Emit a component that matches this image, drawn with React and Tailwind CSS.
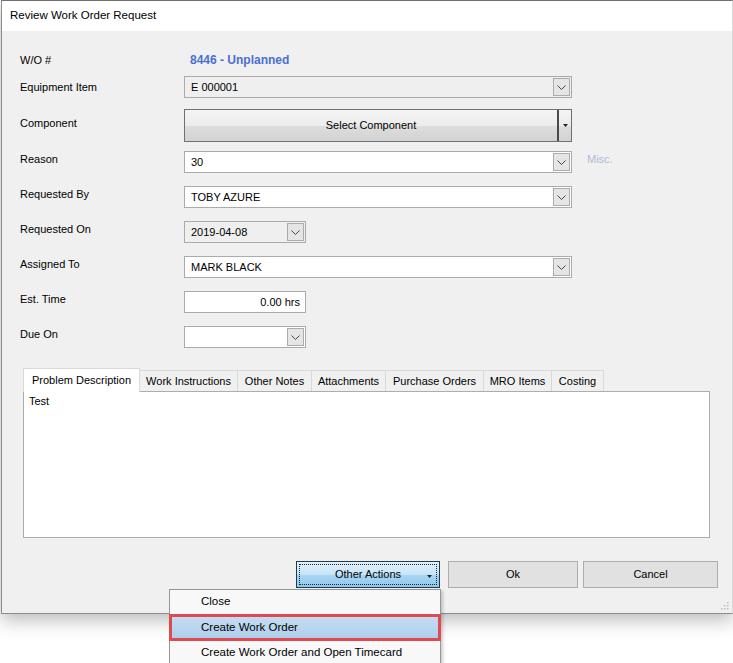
const font = { fontFamily: '"Liberation Sans", Arial, sans-serif' };

function DropButton() {
  return (
    <span className="flex h-[18px] w-[17px] items-center justify-center border border-[#acacac] bg-[#e5e5e5]">
      <svg width="9" height="5" viewBox="0 0 9 5">
        <path d="M0.5 0.5 L4.5 4.5 L8.5 0.5" fill="none" stroke="#444" strokeWidth="1" />
      </svg>
    </span>
  );
}

function Combo({ value, width = "w-[388px]", disabled = false }) {
  return (
    <div
      className={`flex h-[22px] ${width} items-center justify-between border border-[#ababab] pl-[6px] pr-[1px] ${
        disabled ? "bg-[#efefef]" : "bg-white"
      }`}
    >
      <span className="text-[11px] leading-none text-black">{value}</span>
      <DropButton />
    </div>
  );
}

function Row({ label, children, extra }) {
  return (
    <div className="flex h-[35px] items-start">
      <div className="w-[164px] pt-[1px] text-[11px] leading-[14px] text-black">{label}</div>
      {children}
      {extra}
    </div>
  );
}

const tabs = [
  ["Problem Description", "w-[117px]"],
  ["Work Instructions", "w-[98px]"],
  ["Other Notes", "w-[74px]"],
  ["Attachments", "w-[74px]"],
  ["Purchase Orders", "w-[98px]"],
  ["MRO Items", "w-[68px]"],
  ["Costing", "w-[52px]"],
];

const btnGradient = "bg-[linear-gradient(#f4f4f4_0%,#ececec_50%,#dedede_51%,#d2d2d2_100%)]";

export default function App() {
  return (
    <div className="relative h-[663px] w-[733px] overflow-hidden bg-white" style={font}>
      {/* dialog window */}
      <div className="ml-[1px] flex h-[614px] w-[732px] flex-col border border-t-[#6f6f6f] border-l-[#8c8c8c] border-r-[#dadada] border-b-[#8c8c8c] bg-[#f0f0f0] shadow-[0_6px_18px_rgba(0,0,0,0.28)]">
        <div className="flex h-[30px] shrink-0 items-center bg-white pl-[8px] text-[11.5px] text-black">
          Review Work Order Request
        </div>

        <div className="flex flex-1 flex-col pl-[18px]">
          {/* W/O # */}
          <div className="mt-[22px] flex h-[14px] items-center">
            <div className="w-[170px] text-[11px] leading-[14px]">W/O #</div>
            <div className="text-[12px] font-bold leading-[14px] text-[#4a6fd2]">8446 - Unplanned</div>
          </div>

          {/* Equipment Item */}
          <div className="mt-[9px] flex h-[22px] items-center">
            <div className="w-[164px] text-[11px] leading-[14px]">Equipment Item</div>
            <Combo value="E 000001" disabled />
          </div>

          {/* Component */}
          <div className="mt-[11px] flex h-[33px] items-start">
            <div className="w-[164px] pt-[7px] text-[11px] leading-[14px]">Component</div>
            <div className="flex h-[33px] w-[388px] border border-[#707070]">
              <div className={`flex flex-1 items-center justify-center ${btnGradient} text-[11px]`}>
                Select Component
              </div>
              <div className="w-[2px] bg-[#4a4a4a]"></div>
              <div className={`flex w-[12px] items-center justify-center ${btnGradient}`}>
                <svg width="5" height="3" viewBox="0 0 5 3">
                  <path d="M0 0 H5 L2.5 3 Z" fill="#222" />
                </svg>
              </div>
            </div>
          </div>

          <div className="mt-[9px] flex flex-col">
            <Row
              label="Reason"
              extra={<span className="ml-[15px] pt-[1px] text-[11px] leading-[14px] text-[#aebbd8]">Misc.</span>}
            >
              <Combo value="30" />
            </Row>
            <Row label="Requested By">
              <Combo value="TOBY AZURE" />
            </Row>
            <Row label="Requested On">
              <Combo value="2019-04-08" width="w-[122px]" disabled />
            </Row>
            <Row label="Assigned To">
              <Combo value="MARK BLACK" />
            </Row>
            <Row label="Est. Time">
              <div className="flex h-[22px] w-[122px] items-center justify-end border border-[#ababab] bg-white pr-[5px] text-[11px]">
                0.00 hrs
              </div>
            </Row>
            <Row label="Due On">
              <Combo value="" width="w-[122px]" />
            </Row>
          </div>

          {/* tabs */}
          <div className="ml-[3px] mt-[7px] flex h-[23px] items-end">
            {tabs.map(([t, w], i) =>
              i === 0 ? (
                <div
                  key={t}
                  className={`relative z-10 -mb-[1px] flex h-[24px] ${w} items-center justify-center border border-b-0 border-[#d9d9d9] bg-white text-[11px]`}
                >
                  {t}
                </div>
              ) : (
                <div
                  key={t}
                  className={`flex h-[21px] ${w} items-center justify-center border border-l-0 border-b-0 border-[#d9d9d9] bg-[#f0f0f0] text-[11px]`}
                >
                  {t}
                </div>
              )
            )}
          </div>
          <div className="ml-[3px] h-[147px] w-[687px] border border-[#adadad] bg-white pl-[5px] pt-[1px] text-[11px] leading-[16px]">
            Test
          </div>

          {/* buttons */}
          <div className="mt-[23px] flex h-[27px]">
            <div className="ml-[276px] flex w-[144px] items-center justify-center border border-[#1b3a56] bg-[linear-gradient(#e3f1fb_0%,#c6e4f7_50%,#a9d6f2_51%,#8fc8ec_100%)] p-[2px]">
              <div className="relative flex h-full w-full items-center justify-center border border-dotted border-[#222] text-[11px]">
                Other Actions
                <svg className="absolute right-[4px] top-[10px]" width="5" height="3" viewBox="0 0 5 3">
                  <path d="M0 0 H5 L2.5 3 Z" fill="#222" />
                </svg>
              </div>
            </div>
            <div className="ml-[8px] flex w-[130px] items-center justify-center border border-[#adadad] bg-[#e1e1e1] text-[11px]">
              Ok
            </div>
            <div className="ml-[5px] flex w-[135px] items-center justify-center border border-[#adadad] bg-[#e1e1e1] text-[11px]">
              Cancel
            </div>
          </div>

          {/* size grip */}
          <div className="mr-[3px] mt-auto mb-[3px] self-end">
            <svg width="10" height="10" viewBox="0 0 10 10">
              {[
                [8, 2],
                [5, 5],
                [8, 5],
                [2, 8],
                [5, 8],
                [8, 8],
              ].map(([x, y]) => (
                <rect key={`${x}-${y}`} x={x} y={y} width="1.5" height="1.5" fill="#bdbdbd" />
              ))}
            </svg>
          </div>
        </div>
      </div>

      {/* context menu */}
      <div className="absolute left-[169px] top-[589px] w-[272px] border border-[#979797] bg-[#f8f8f8] text-[11.5px] shadow-[2px_2px_3px_rgba(0,0,0,0.2)]">
        <div className="flex h-[24px] items-center pl-[31px]">Close</div>
        <div className="-mx-[1px] flex h-[27px] items-center border-[3px] border-[#de4a4f] bg-[linear-gradient(#c4dcf2,#b0cfec)] pl-[29px]">
          Create Work Order
        </div>
        <div className="flex h-[24px] items-center pl-[31px]">Create Work Order and Open Timecard</div>
      </div>
    </div>
  );
}
